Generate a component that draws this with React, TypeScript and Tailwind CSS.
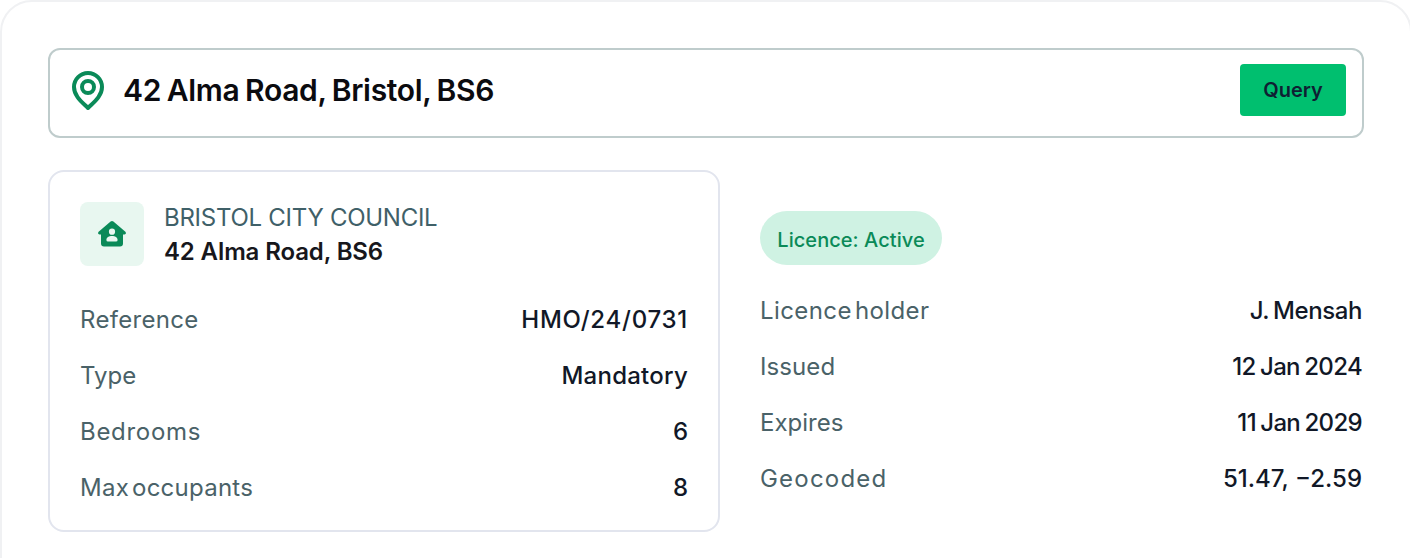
export default function App() {
  const font = { fontFamily: "Inter, sans-serif" };
  const Row = ({ k, v, kc, vc }: { k: string; v: string; kc: string; vc: string }) => (
    <div className="flex h-[56px] items-center justify-between text-[24px]">
      <span className={`font-normal text-[#4a6268] [word-spacing:-4px] ${kc}`}>{k}</span>
      <span className={`font-medium text-[#111827] ${vc}`}>{v}</span>
    </div>
  );
  return (
    <div className="h-[558px] w-[1410px] overflow-hidden bg-white" style={font}>
      <div className="h-[600px] w-[1412px] rounded-[32px] border-2 border-[#f0f1f3] bg-white p-[46px]">
        <div className="flex h-[90px] items-center rounded-[12px] border-2 border-[#bfcccc] pb-[20px] pl-[20px] pr-[16px] pt-[14px]">
          <svg width="36" height="40" viewBox="0 0 36 40" fill="none" stroke="#0a8a58" strokeWidth="4">
            <path d="M18 38 C12 32 4 26 4 17 A14 14 0 0 1 32 17 C32 26 24 32 18 38 Z" strokeLinejoin="round" />
            <circle cx="18" cy="17" r="6" />
          </svg>
          <span className="ml-[17px] text-[30px] font-semibold tracking-[-0.33px] text-[#0b0b0f] [word-spacing:-1.5px]">42 Alma Road, Bristol, BS6</span>
          <button className="ml-auto flex h-[52px] w-[106px] items-center justify-center rounded-[4px] bg-[#00bf6f] text-[20px] font-semibold text-[#0f1f33]">Query</button>
        </div>
        <div className="mt-[32px] flex">
          <div className="h-[362px] w-[672px] rounded-[16px] border-2 border-[#e2e5ee] px-[30px] pt-[30px]">
            <div className="flex items-start">
              <div className="flex h-[64px] w-[64px] items-center justify-center rounded-[8px] bg-[#e8f7f0]">
                <svg width="28" height="26" viewBox="0 0 28 26">
                  <path fillRule="evenodd" fill="#0a8a58" d="M12.6 0.6 Q14 -0.4 15.4 0.6 L27.4 10.8 Q28.8 13 26.5 13.4 L25 13.4 L25 22.5 Q25 25.5 22 25.5 L6 25.5 Q3 25.5 3 22.5 L3 13.4 L1.5 13.4 Q-0.8 13 0.6 10.8 Z M14 7.6 A3.1 3.1 0 1 0 14 13.8 A3.1 3.1 0 1 0 14 7.6 Z M10 20.5 L18 20.5 Q19.6 20.5 19.6 19 C19.6 16.4 17 15 14 15 C11 15 8.4 16.4 8.4 19 Q8.4 20.5 10 20.5 Z" />
                </svg>
              </div>
              <div className="ml-[20px]">
                <div className="text-[24px] leading-[32px] tracking-[-0.27px] text-[#3f6068]">BRISTOL CITY COUNCIL</div>
                <div className="mt-[2px] text-[24px] font-semibold leading-[32px] tracking-[-0.12px] text-[#17171c]">42 Alma Road, BS6</div>
              </div>
            </div>
            <div className="mt-[24px]">
              <Row k="Reference" v="HMO/24/0731" kc="tracking-[0.3px]" vc="tracking-[0.75px]" />
              <Row k="Type" v="Mandatory" kc="tracking-[0px]" vc="tracking-[0.25px]" />
              <Row k="Bedrooms" v="6" kc="tracking-[0.7px]" vc="tracking-[0px]" />
              <Row k="Max occupants" v="8" kc="tracking-[0.25px]" vc="tracking-[0px]" />
            </div>
          </div>
          <div className="ml-[40px] w-[602px] pt-[41px]">
            <div className="flex h-[54px] w-[182px] items-center justify-center rounded-full bg-[#cff2e3] pt-[3px] text-[20px] font-medium tracking-[0.05px] text-[#0a8a58]">Licence: Active</div>
            <div className="mt-[18px]">
              <Row k="Licence holder" v="J. Mensah" kc="tracking-[0.4px]" vc="tracking-[-0.4px] [word-spacing:-2px]" />
              <Row k="Issued" v="12 Jan 2024" kc="tracking-[0.1px]" vc="tracking-[-0.65px] [word-spacing:-1.5px]" />
              <Row k="Expires" v="11 Jan 2029" kc="tracking-[0px]" vc="tracking-[-0.65px] [word-spacing:-1.5px]" />
              <Row k="Geocoded" v="51.47, −2.59" kc="tracking-[1.2px]" vc="tracking-[0px]" />
            </div>
          </div>
        </div>
      </div>
    </div>
  );
}
